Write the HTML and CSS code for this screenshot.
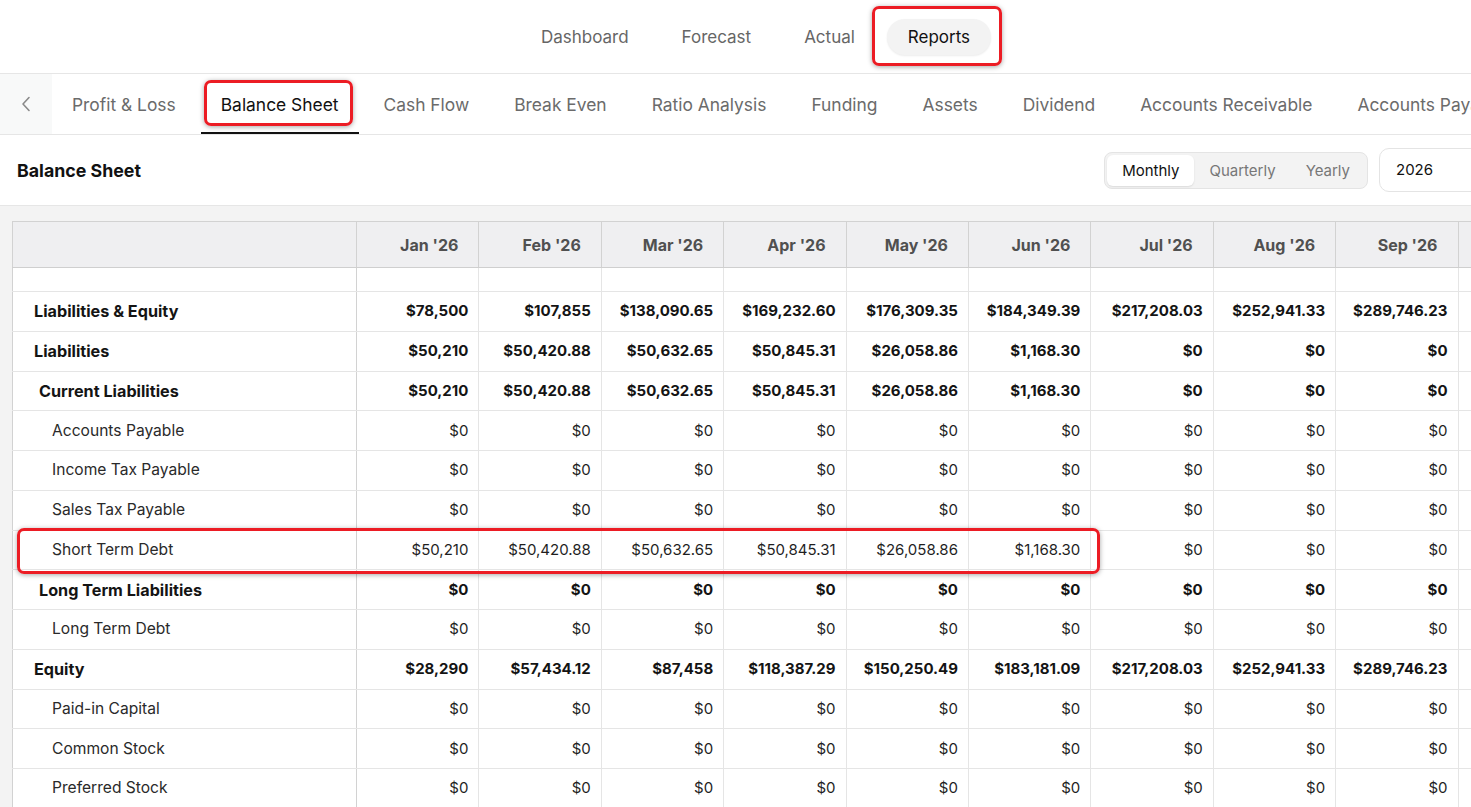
FILE: index.html
```html
<!DOCTYPE html>
<html lang="en">
<head>
    <meta charset="UTF-8">
    <meta name="viewport" content="width=device-width, initial-scale=1.0">
    <title>Reports - Balance Sheet</title>
    <link rel="stylesheet" href="styles.css">
</head>
<body>
<div class="page">
    <nav class="top-nav">
        <a href="#">Dashboard</a>
        <a href="#">Forecast</a>
        <a href="#">Actual</a>
        <a href="#" class="active">Reports</a>
    </nav>

    <div class="sub-tabs">
        <div class="tab-back">
            <svg width="10" height="16" viewBox="0 0 10 16"><path d="M8 1.5 L2 8 L8 14.5" fill="none" stroke="#8a8a8a" stroke-width="1.6" stroke-linecap="round" stroke-linejoin="round"/></svg>
        </div>
        <a href="#">Profit &amp; Loss</a>
        <a href="#" class="active">Balance Sheet</a>
        <a href="#">Cash Flow</a>
        <a href="#">Break Even</a>
        <a href="#">Ratio Analysis</a>
        <a href="#">Funding</a>
        <a href="#">Assets</a>
        <a href="#">Dividend</a>
        <a href="#">Accounts Receivable</a>
        <a href="#">Accounts Payable</a>
    </div>

    <div class="report-head">
        <h1>Balance Sheet</h1>
        <div class="controls">
            <div class="segmented">
                <button class="active">Monthly</button>
                <button>Quarterly</button>
                <button>Yearly</button>
            </div>
            <div class="year-select">2026</div>
        </div>
    </div>

    <div class="table-area">
        <table class="sheet">
            <colgroup>
                <col class="col-label">
                <col><col><col><col><col><col><col><col><col><col>
            </colgroup>
            <thead>
                <tr>
                    <th></th>
                    <th>Jan '26</th><th>Feb '26</th><th>Mar '26</th><th>Apr '26</th><th>May '26</th><th>Jun '26</th>
                    <th>Jul '26</th><th>Aug '26</th><th>Sep '26</th><th></th>
                </tr>
            </thead>
            <tbody>
                <tr class="spacer"><td></td><td></td><td></td><td></td><td></td><td></td><td></td><td></td><td></td><td></td><td></td></tr>
                <tr class="bold lvl0">
                    <td>Liabilities &amp; Equity</td>
                    <td>$78,500</td><td>$107,855</td><td>$138,090.65</td><td>$169,232.60</td><td>$176,309.35</td><td>$184,349.39</td>
                    <td>$217,208.03</td><td>$252,941.33</td><td>$289,746.23</td><td></td>
                </tr>
                <tr class="bold lvl0">
                    <td>Liabilities</td>
                    <td>$50,210</td><td>$50,420.88</td><td>$50,632.65</td><td>$50,845.31</td><td>$26,058.86</td><td>$1,168.30</td>
                    <td>$0</td><td>$0</td><td>$0</td><td></td>
                </tr>
                <tr class="bold lvl1">
                    <td>Current Liabilities</td>
                    <td>$50,210</td><td>$50,420.88</td><td>$50,632.65</td><td>$50,845.31</td><td>$26,058.86</td><td>$1,168.30</td>
                    <td>$0</td><td>$0</td><td>$0</td><td></td>
                </tr>
                <tr class="lvl2">
                    <td>Accounts Payable</td>
                    <td>$0</td><td>$0</td><td>$0</td><td>$0</td><td>$0</td><td>$0</td><td>$0</td><td>$0</td><td>$0</td><td></td>
                </tr>
                <tr class="lvl2">
                    <td>Income Tax Payable</td>
                    <td>$0</td><td>$0</td><td>$0</td><td>$0</td><td>$0</td><td>$0</td><td>$0</td><td>$0</td><td>$0</td><td></td>
                </tr>
                <tr class="lvl2">
                    <td>Sales Tax Payable</td>
                    <td>$0</td><td>$0</td><td>$0</td><td>$0</td><td>$0</td><td>$0</td><td>$0</td><td>$0</td><td>$0</td><td></td>
                </tr>
                <tr class="lvl2">
                    <td>Short Term Debt</td>
                    <td>$50,210</td><td>$50,420.88</td><td>$50,632.65</td><td>$50,845.31</td><td>$26,058.86</td><td>$1,168.30</td>
                    <td>$0</td><td>$0</td><td>$0</td><td></td>
                </tr>
                <tr class="bold lvl1">
                    <td>Long Term Liabilities</td>
                    <td>$0</td><td>$0</td><td>$0</td><td>$0</td><td>$0</td><td>$0</td><td>$0</td><td>$0</td><td>$0</td><td></td>
                </tr>
                <tr class="lvl2">
                    <td>Long Term Debt</td>
                    <td>$0</td><td>$0</td><td>$0</td><td>$0</td><td>$0</td><td>$0</td><td>$0</td><td>$0</td><td>$0</td><td></td>
                </tr>
                <tr class="bold lvl0">
                    <td>Equity</td>
                    <td>$28,290</td><td>$57,434.12</td><td>$87,458</td><td>$118,387.29</td><td>$150,250.49</td><td>$183,181.09</td>
                    <td>$217,208.03</td><td>$252,941.33</td><td>$289,746.23</td><td></td>
                </tr>
                <tr class="lvl2">
                    <td>Paid-in Capital</td>
                    <td>$0</td><td>$0</td><td>$0</td><td>$0</td><td>$0</td><td>$0</td><td>$0</td><td>$0</td><td>$0</td><td></td>
                </tr>
                <tr class="lvl2">
                    <td>Common Stock</td>
                    <td>$0</td><td>$0</td><td>$0</td><td>$0</td><td>$0</td><td>$0</td><td>$0</td><td>$0</td><td>$0</td><td></td>
                </tr>
                <tr class="lvl2">
                    <td>Preferred Stock</td>
                    <td>$0</td><td>$0</td><td>$0</td><td>$0</td><td>$0</td><td>$0</td><td>$0</td><td>$0</td><td>$0</td><td></td>
                </tr>
            </tbody>
        </table>
    </div>
</div>

<!-- review highlights drawn over the page -->
<div class="mark mark-reports"></div>
<div class="mark mark-tab"></div>
<div class="mark mark-row"></div>
</body>
</html>
```

FILE: styles.css
```css
body {
    margin: 0;
    font-family: Inter, "Noto Sans", sans-serif;
    color: #1b1b1b;
    background: #fff;
    overflow: hidden;
}
.page {
    width: 1511px;
}

/* top navigation */
.top-nav {
    height: 73px;
    display: flex;
    justify-content: center;
    align-items: center;
    gap: 11px;
    border-bottom: 1px solid #e6e6e6;
}
.top-nav a {
    height: 36px;
    line-height: 36px;
    padding: 0 21px;
    font-size: 17px;
    color: #666;
    text-decoration: none;
    border-radius: 18px;
}
.top-nav a.active {
    background: #f3f3f3;
    color: #111;
    box-shadow: 0 1px 2px rgba(0, 0, 0, 0.08);
}

/* report tabs */
.sub-tabs {
    display: flex;
    height: 60px;
    border-bottom: 1px solid #e6e6e6;
    white-space: nowrap;
    overflow: hidden;
}
.tab-back {
    width: 52px;
    flex: none;
    background: #f8f9f9;
    display: flex;
    align-items: center;
    justify-content: center;
}
.sub-tabs a {
    display: flex;
    align-items: center;
    padding: 2px 20px 0;
    margin-right: 5px;
    font-size: 17.4px;
    color: #6b6b6b;
    text-decoration: none;
    border-bottom: 2px solid transparent;
    flex: none;
}
.sub-tabs a.active {
    color: #111;
    border-bottom-color: #111;
}

/* title bar */
.report-head {
    height: 70px;
    display: flex;
    align-items: center;
    justify-content: space-between;
    padding: 0 17px;
    border-bottom: 1px solid #e6e6e6;
}
.report-head h1 {
    margin: 0;
    font-size: 17.8px;
    font-weight: 700;
    color: #111;
}
.controls {
    display: flex;
    align-items: center;
    gap: 11px;
}
.segmented {
    display: flex;
    padding: 2px;
    background: #f3f3f3;
    border: 1px solid #e4e4e4;
    border-radius: 8px;
}
.segmented button {
    height: 31px;
    padding: 0 15px;
    border: none;
    background: none;
    font-family: inherit;
    font-size: 15px;
    color: #777;
    border-radius: 6px;
}
.segmented button.active {
    background: #fff;
    color: #111;
    box-shadow: 0 1px 2px rgba(0, 0, 0, 0.1);
}
.year-select {
    width: 97px;
    height: 42px;
    line-height: 42px;
    padding-left: 16px;
    border: 1px solid #e4e4e4;
    border-radius: 10px;
    font-size: 15px;
    color: #111;
}

/* table */
.table-area {
    background: #f3f3f3;
    padding: 15px 0 0 12px;
    height: 600px;
}
.sheet {
    border-collapse: collapse;
    table-layout: fixed;
    width: 1568px;
    background: #fff;
    border: 1px solid #d2d2d2;
}
.sheet col {
    width: 122.4px;
}
.sheet col.col-label {
    width: 344px;
}
.sheet th {
    height: 45px;
    padding: 0 20px 0 0;
    background: #efeff1;
    font-size: 16px;
    font-weight: 700;
    color: #505050;
    text-align: right;
    border-right: 1px solid #d2d2d2;
    border-bottom: 1px solid #cfcfcf;
}
.sheet td {
    height: 38.75px;
    padding: 0 10px 0 0;
    font-size: 15px;
    line-height: 20px;
    color: #1f1f1f;
    text-align: right;
    white-space: nowrap;
    border-bottom: 1px solid #e5e5e5;
    border-right: 1px solid #e5e5e5;
}
.sheet td:first-child {
    text-align: left;
    border-right-color: #d2d2d2;
}
.sheet tr.spacer td {
    height: 23px;
}
.sheet tr.bold td {
    font-weight: 700;
    color: #141414;
}
.sheet tr.bold td:first-child {
    font-size: 16.2px;
}
.sheet tr.lvl0 td:first-child {
    padding-left: 21px;
}
.sheet tr.lvl1 td:first-child {
    padding-left: 26px;
}
.sheet tr.lvl2 td:first-child {
    padding-left: 39px;
    font-size: 15.6px;
    color: #2a2a2a;
}

/* red review highlights */
.mark {
    position: absolute;
    border: 3px solid #ec1c24;
    border-radius: 7px;
    box-shadow: 0 1px 5px rgba(0, 0, 0, 0.35);
    pointer-events: none;
}
.mark-reports {
    left: 872px;
    top: 6px;
    width: 124px;
    height: 54px;
}
.mark-tab {
    left: 204px;
    top: 80px;
    width: 143px;
    height: 40px;
}
.mark-row {
    left: 17px;
    top: 528px;
    width: 1077px;
    height: 40px;
}
```
